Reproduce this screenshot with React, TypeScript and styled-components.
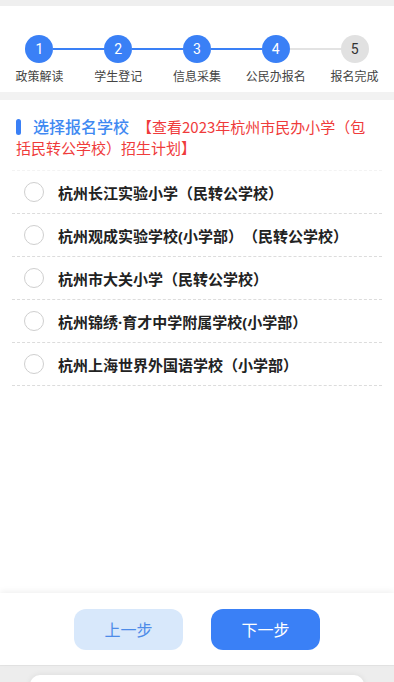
import styled, { createGlobalStyle } from "styled-components";

const GlobalStyle = createGlobalStyle`
  html, body {
    margin: 0;
    padding: 0;
    background: #f2f2f2;
    font-family: "Noto Sans", "Noto Sans CJK SC", sans-serif;
    text-spacing-trim: space-all;
  }
  * {
    box-sizing: border-box;
  }
`;

const steps = ["政策解读", "学生登记", "信息采集", "公民办报名", "报名完成"];
const current = 4;

const schools = [
  "杭州长江实验小学（民转公学校）",
  "杭州观成实验学校(小学部）（民转公学校）",
  "杭州市大关小学（民转公学校）",
  "杭州锦绣·育才中学附属学校(小学部）",
  "杭州上海世界外国语学校（小学部）",
];

function App() {
  return (
    <Page>
      <GlobalStyle />
      <TopStrip />
      <Stepper>
        {steps.map((label, i) => {
          const n = i + 1;
          return (
            <Step key={label}>
              <Track>
                <Segment $hidden={n === 1} $active={n <= current} />
                <Dot $active={n <= current}>{n}</Dot>
                <Segment $hidden={n === steps.length} $active={n < current} />
              </Track>
              <StepLabel>{label}</StepLabel>
            </Step>
          );
        })}
      </Stepper>
      <Content>
        <Title>
          <Bar />
          <TitleBlue>选择报名学校</TitleBlue>
          <TitleRed>【查看2023年杭州市民办小学（包括民转公学校）招生计划】</TitleRed>
        </Title>
        <List>
          {schools.map((s) => (
            <Row key={s}>
              <Radio />
              <SchoolName>{s}</SchoolName>
            </Row>
          ))}
        </List>
      </Content>
      <Footer>
        <Button $primary={false}>上一步</Button>
        <Button $primary>下一步</Button>
      </Footer>
      <Bottom>
        <Sheet />
      </Bottom>
    </Page>
  );
}

const Page = styled.div`
  height: 100vh;
  display: flex;
  flex-direction: column;
  background: #f2f2f2;
  overflow: hidden;
`;

const TopStrip = styled.div`
  height: 6px;
  background: #efefef;
  flex-shrink: 0;
`;

const Stepper = styled.div`
  display: grid;
  grid-template-columns: repeat(5, 1fr);
  background: #fff;
  padding-top: 29px;
  height: 86px;
  flex-shrink: 0;
`;

const Step = styled.div`
  display: flex;
  flex-direction: column;
  align-items: center;
`;

const Track = styled.div`
  display: flex;
  align-items: center;
  width: 100%;
`;

const Segment = styled.div<{ $hidden: boolean; $active: boolean }>`
  flex: 1;
  height: 2px;
  background: ${(p) => (p.$hidden ? "transparent" : p.$active ? "#3a80f6" : "#e3e3e3")};
`;

const Dot = styled.div<{ $active: boolean }>`
  width: 28px;
  height: 28px;
  border-radius: 50%;
  display: flex;
  align-items: center;
  justify-content: center;
  font-family: Roboto, "Noto Sans", sans-serif;
  font-size: 14px;
  background: ${(p) => (p.$active ? "#3a80f6" : "#e1e1e1")};
  color: ${(p) => (p.$active ? "#fff" : "#333")};
  flex-shrink: 0;
`;

const StepLabel = styled.div`
  margin-top: 5px;
  font-size: 12px;
  line-height: 16px;
  color: #444;
  font-family: "Noto Sans CJK SC", sans-serif;
  white-space: nowrap;
`;

const Content = styled.div`
  margin-top: 8px;
  flex: 1;
  background: #fff;
  padding: 16px 12px 0;
`;

const Title = styled.div`
  padding: 0 4px;
  font-family: "Noto Sans CJK SC", sans-serif;
  line-height: 20px;
`;

const Bar = styled.span`
  display: inline-block;
  width: 5px;
  height: 16px;
  border-radius: 3px;
  background: #3a80f6;
  vertical-align: -2px;
  margin-right: 12px;
`;

const TitleBlue = styled.span`
  font-size: 16px;
  font-weight: 500;
  color: #4089f2;
  margin-right: 8px;
`;

const TitleRed = styled.span`
  font-size: 15px;
  color: #ef3b3b;
`;

const List = styled.div`
  margin-top: 12px;
  border-top: 1px dashed #f3f3f3;
`;

const Row = styled.div`
  display: flex;
  align-items: center;
  height: 43px;
  padding-left: 12px;
  border-bottom: 1px dashed #dcdcdc;
`;

const Radio = styled.span`
  width: 20px;
  height: 20px;
  border-radius: 50%;
  border: 1px solid #cfcfcf;
  flex-shrink: 0;
  margin-right: 14px;
`;

const SchoolName = styled.span`
  font-family: "Noto Sans", "Noto Sans CJK SC", sans-serif;
  font-size: 15px;
  font-weight: 700;
  color: #222;
`;

const Footer = styled.div`
  height: 72px;
  flex-shrink: 0;
  background: #fff;
  box-shadow: 0 -2px 6px rgba(0, 0, 0, 0.06);
  display: flex;
  justify-content: center;
  align-items: center;
  gap: 28px;
  position: relative;
`;

const Button = styled.button<{ $primary: boolean }>`
  width: 109px;
  height: 41px;
  border: none;
  border-radius: 12px;
  font-family: "Noto Sans CJK SC", sans-serif;
  font-size: 16px;
  background: ${(p) => (p.$primary ? "#3a80f6" : "#d8e8fb")};
  color: ${(p) => (p.$primary ? "#fff" : "#4d8be8")};
`;

const Bottom = styled.div`
  height: 17px;
  flex-shrink: 0;
  background: #ededed;
  border-top: 1px solid #e4e4e4;
  display: flex;
  justify-content: center;
  padding-top: 9px;
`;

const Sheet = styled.div`
  width: 334px;
  height: 20px;
  background: #fff;
  border-radius: 10px 10px 0 0;
  box-shadow: 0 0 6px rgba(0, 0, 0, 0.08);
`;

export default App;
